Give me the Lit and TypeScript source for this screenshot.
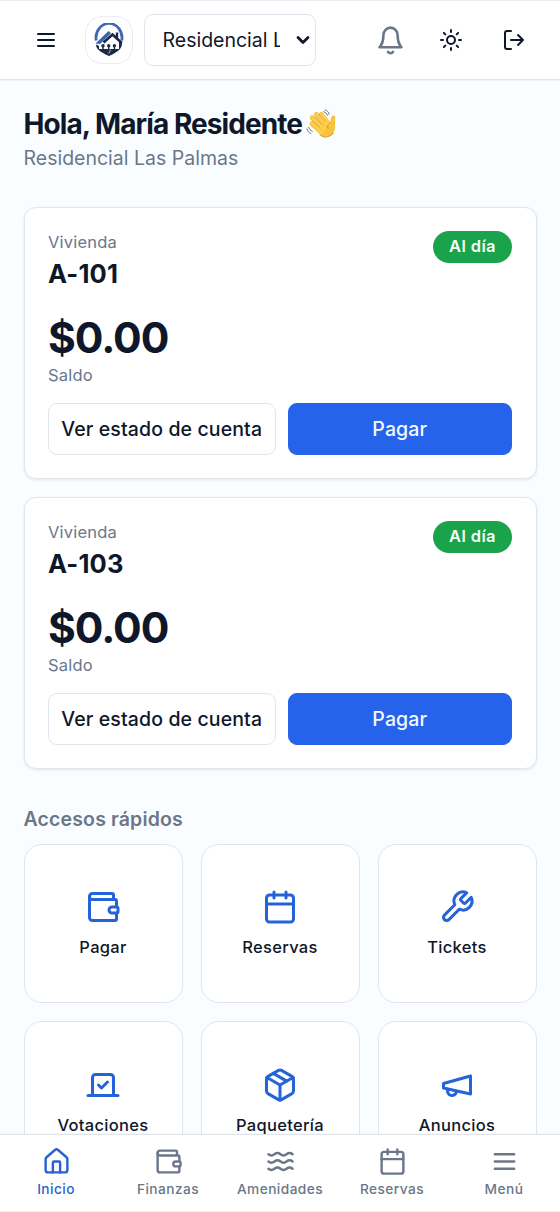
import { LitElement, html, css, svg } from "lit";
import { customElement, property } from "lit/decorators.js";

const ICONS: Record<string, any> = {
  menu: svg`<path d="M4 6h16M4 12h16M4 18h16"/>`,
  bell: svg`<path d="M6.500 8a5.500 6 0 0 1 11 0c0 6.500 3 9.200 3 9.200h-17s3-2.700 3-9.200"/><path d="M10.100 20.800a2.100 1.800 0 0 0 3.800 0"/>`,
  sun: svg`<circle cx="12" cy="12" r="4"/><path d="M12 2v2M12 20v2M4.93 4.93l1.41 1.41M17.66 17.66l1.41 1.41M2 12h2M20 12h2M6.34 17.66l-1.41 1.41M19.07 4.93l-1.41 1.41"/>`,
  logout: svg`<path d="M9 21H5a2 2 0 0 1-2-2V5a2 2 0 0 1 2-2h4"/><path d="m16 17 5-5-5-5M21 12H9"/>`,
  wallet: svg`<path d="M19 7V4a1 1 0 0 0-1-1H5a2 2 0 0 0 0 4h15a1 1 0 0 1 1 1v4h-3a2 2 0 0 0 0 4h3a1 1 0 0 0 1-1v-2a1 1 0 0 0-1-1"/><path d="M3 5v14a2 2 0 0 0 2 2h15a1 1 0 0 0 1-1v-4"/>`,
  calendar: svg`<path d="M8 2v4M16 2v4M3 10h18"/><rect width="18" height="18" x="3" y="4" rx="2"/>`,
  wrench: svg`<path d="M14.7 6.3a1 1 0 0 0 0 1.4l1.6 1.6a1 1 0 0 0 1.4 0l3.77-3.77a6 6 0 0 1-7.94 7.94l-6.91 6.91a2.12 2.12 0 0 1-3-3l6.91-6.91a6 6 0 0 1 7.94-7.94l-3.76 3.76z"/>`,
  vote: svg`<path d="m9 12 2 2 4-4"/><path d="M5 7c0-1.1.9-2 2-2h10a2 2 0 0 1 2 2v12H5V7Z"/><path d="M22 19H2"/>`,
  box: svg`<path d="M11 21.73a2 2 0 0 0 2 0l7-4A2 2 0 0 0 21 16V8a2 2 0 0 0-1-1.73l-7-4a2 2 0 0 0-2 0l-7 4A2 2 0 0 0 3 8v8a2 2 0 0 0 1 1.73z"/><path d="M12 22V12"/><path d="M3.29 7 12 12l8.71-5"/><path d="m7.5 4.27 9 5.15"/>`,
  megaphone: svg`<path d="m3 11 18-5v12L3 14v-3z"/><path d="M11.6 16.8a3 3 0 1 1-5.8-1.6"/>`,
  home: svg`<path d="M15 21v-8a1 1 0 0 0-1-1h-4a1 1 0 0 0-1 1v8"/><path d="M3 10a2 2 0 0 1 .709-1.528l7-5.999a2 2 0 0 1 2.582 0l7 5.999A2 2 0 0 1 21 10v9a2 2 0 0 1-2 2H5a2 2 0 0 1-2-2z"/>`,
  waves: svg`<path d="M2 6c.6.5 1.2 1 2.5 1C7 7 7 5 9.5 5c2.6 0 2.4 2 5 2 2.5 0 2.5-2 5-2 1.3 0 1.9.5 2.5 1"/><path d="M2 12c.6.5 1.2 1 2.5 1 2.5 0 2.5-2 5-2 2.6 0 2.4 2 5 2 2.5 0 2.5-2 5-2 1.3 0 1.9.5 2.5 1"/><path d="M2 18c.6.5 1.2 1 2.5 1 2.5 0 2.5-2 5-2 2.6 0 2.4 2 5 2 2.5 0 2.5-2 5-2 1.3 0 1.9.5 2.5 1"/>`,
};

@customElement("ui-icon")
class UiIcon extends LitElement {
  @property() name = "";
  static styles = css`
    :host { display: block; width: 24px; height: 24px; }
    .glyph { display: block; width: 100%; height: 100%; overflow: visible; }
  `;
  render() {
    return html`<svg class="glyph" viewBox="0 0 24 24" fill="none" stroke="currentColor" stroke-width="2" stroke-linecap="round" stroke-linejoin="round">${ICONS[this.name]}</svg>`;
  }
}

@customElement("unit-card")
class UnitCard extends LitElement {
  @property() unit = "";
  static styles = css`
    :host { display: block; box-sizing: border-box; height: 272px; padding: 23px 23.5px; background: #fff; border: 1px solid #e1e6ee; border-radius: 12px; box-shadow: 0 1px 3px rgba(15, 23, 42, 0.1); color: #0f172a; }
    .top { display: flex; justify-content: space-between; align-items: flex-start; }
    .muted { font-size: 16.5px; line-height: 23px; color: #6b7789; letter-spacing: 0.2px; }
    .name { font-size: 25.5px; line-height: 39px; font-weight: 650; letter-spacing: 0.15px; }
    .badge { box-sizing: border-box; height: 32px; width: 79px; border-radius: 16px; background: #1aa34a; color: #f5fff8; font-size: 16.5px; line-height: 31px; font-weight: 600; text-align: center; letter-spacing: 0.4px; }
    .amount { margin-top: 22px; font-size: 42.5px; line-height: 46px; font-weight: 700; letter-spacing: -1.05px; }
    .balance { margin-top: 2.5px; }
    .actions { display: grid; grid-template-columns: 227.5px 1fr; gap: 12px; margin-top: 16.5px; }
    .btn { box-sizing: border-box; height: 52px; border-radius: 9px; border: 1px solid #e1e6ee; background: #fff; color: #0f172a; font: 500 19.5px/50px Inter, sans-serif; letter-spacing: 0.12px; padding: 0; text-align: center; white-space: nowrap; }
    .primary { background: #2563eb; border-color: #2563eb; color: #f4f8ff; }
  `;
  render() {
    return html`
      <div class="top">
        <div>
          <div class="muted">Vivienda</div>
          <div class="name">${this.unit}</div>
        </div>
        <span class="badge">Al día</span>
      </div>
      <div class="amount">$0.00</div>
      <div class="muted balance">Saldo</div>
      <div class="actions">
        <button class="btn">Ver estado de cuenta</button>
        <button class="btn primary">Pagar</button>
      </div>`;
  }
}

@customElement("app-root")
class AppRoot extends LitElement {
  static styles = css`
    :host { display: flex; flex-direction: column; box-sizing: border-box; height: 1212px; overflow: hidden; background: #f9fdff; color: #0f172a; font-family: Inter, "Liberation Sans", sans-serif; }
    .header { flex: none; box-sizing: border-box; height: 80px; display: flex; align-items: center; padding: 0 34px; background: #fff; border-top: 1px solid #ececef; border-bottom: 1px solid #dfe3e8; box-shadow: 0 1px 1px rgba(15, 23, 42, 0.04); }
    .logo { box-sizing: border-box; width: 48px; height: 48px; margin-left: 27px; border: 1px solid #ebedf2; border-radius: 17px; display: flex; align-items: center; justify-content: center; }
    .mark { width: 32px; height: 34px; }
    .select { box-sizing: border-box; width: 172px; height: 52px; margin-left: 11px; padding: 0 4px 0 17.5px; border: 1px solid #dfe5ee; border-radius: 9px; display: flex; align-items: center; justify-content: space-between; }
    .value { width: 117px; overflow: hidden; white-space: nowrap; font-size: 19.5px; line-height: 30px; }
    .chevron { width: 16px; height: 12px; }
    .tools { margin-left: auto; display: flex; align-items: center; }
    .bell { width: 31px; height: 31px; color: #6b7789; }
    .sun { margin-left: 33px; }
    .exit { margin-left: 39px; }
    .body { flex: 1; min-height: 0; overflow: hidden; padding: 0 23.5px; }
    .title { display: flex; align-items: center; gap: 4px; margin: 25px 0 0; font-size: 28px; line-height: 38px; font-weight: 700; letter-spacing: -0.92px; white-space: nowrap; }
    .wave { width: 31px; height: 31px; }
    .sub { margin: 0; font-size: 19.5px; line-height: 31px; color: #6b7789; }
    .units { display: grid; gap: 18px; margin-top: 33px; }
    .section { margin: 35px 0 0; font-size: 19.5px; line-height: 30px; font-weight: 600; color: #6b7789; letter-spacing: 0.15px; }
    .tiles { display: grid; grid-template-columns: repeat(3, 1fr); gap: 18px; margin-top: 10px; }
    .tile { box-sizing: border-box; height: 159px; display: flex; flex-direction: column; align-items: center; justify-content: center; gap: 10px; background: #fff; border: 1px solid #e1e5ea; border-radius: 18px; font-size: 16.5px; line-height: 24px; font-weight: 500; letter-spacing: 0.3px; }
    .tile:nth-child(n + 4) { padding-top: 2px; }
    .tile ui-icon { width: 36px; height: 36px; color: #2563d9; }
    .nav { flex: none; box-sizing: border-box; height: 78px; display: grid; grid-template-columns: repeat(5, 1fr); background: #fff; border-top: 1px solid #dfe4ea; border-bottom: 1px solid #ececef; box-shadow: 0 -1px 1px rgba(15, 23, 42, 0.03); }
    .tab { display: flex; flex-direction: column; align-items: center; padding-top: 12px; gap: 3px; color: #6b7789; font-size: 13.7px; line-height: 21px; font-weight: 500; letter-spacing: 0.45px; }
    .tab ui-icon { width: 29px; height: 29px; }
    .active { color: #2a62cf; }
  `;

  render() {
    const tiles = [
      ["wallet", "Pagar"], ["calendar", "Reservas"], ["wrench", "Tickets"],
      ["vote", "Votaciones"], ["box", "Paquetería"], ["megaphone", "Anuncios"],
    ];
    const tabs = [
      ["home", "Inicio"], ["wallet", "Finanzas"], ["waves", "Amenidades"],
      ["calendar", "Reservas"], ["menu", "Menú"],
    ];
    return html`
      <header class="header">
        <ui-icon name="menu"></ui-icon>
        <div class="logo">
          <svg class="mark" viewBox="0 0 32 34" fill="none">
            <path d="M3.200 17.500a13 14.500 0 1 1 25.600 0" stroke="#4267b4" stroke-width="2.800"/>
            <path d="M2.500 20.500 15.500 8l2.500 2.300L7 21z" fill="#3c64ad"/>
            <path d="M10.500 19.500 19.500 11.500l9.300 8.500" stroke="#1c2947" stroke-width="2.600"/>
            <path d="M22.800 9.500h2.400v7l-2.400-2z" fill="#1c2947"/>
            <path d="M3 21.500c0 4 3 7 13 11.500 10-4.500 13-7.500 13-13l-3-2v8H6v-3z" fill="#1c2947"/>
            <path d="M10 22v4.500M15.700 22v4.500M21.400 22v4.500" stroke="#1c2947" stroke-width="1.400"/>
            <circle cx="10" cy="22.800" r="1.700" fill="#1c2947"/><circle cx="15.700" cy="22.800" r="1.700" fill="#1c2947"/><circle cx="21.400" cy="22.800" r="1.700" fill="#1c2947"/>
            <path d="M17 26.500c1.500 1.200-1.500 2-1 4" stroke="#c3cddd" stroke-width="1"/>
          </svg>
        </div>
        <div class="select">
          <span class="value">Residencial Las Palmas</span>
          <svg class="chevron" viewBox="0 0 16 12" fill="none" stroke="#0f172a" stroke-width="2.8" stroke-linecap="round" stroke-linejoin="round"><path d="m3 3.500 5 5 5-5"/></svg>
        </div>
        <div class="tools">
          <ui-icon class="bell" name="bell"></ui-icon>
          <ui-icon class="sun" name="sun"></ui-icon>
          <ui-icon class="exit" name="logout"></ui-icon>
        </div>
      </header>
      <main class="body">
        <h1 class="title"><span>Hola, María Residente</span>
          <svg class="wave" viewBox="0 0 32 32" fill="none" stroke-linecap="round" stroke-linejoin="round" role="img">
            <path d="M6 15 17 25M6.200 9 19 21M10.500 5.500 21 17M15.800 5.500 23 15" stroke="#dc9d28" stroke-width="4.600"/>
            <path d="M6 15.500 13 24.500c3 4.500 8 5.500 12 3 4-2.500 5.300-6 5-11 0-3 .3-5.500 .2-8-.2-2.500-3.600-2.500-4.100 0l-1.100 5L17 8z" fill="#f9c33f"/>
            <path d="M5.800 14.700 16 24M6 8.700 19 20.500M10.300 5.200 21 16M15.700 5 24 15.500" stroke="#ffcd4c" stroke-width="3.700"/>
            <path d="M7.800 13.300 14 19M8.500 8.300 17 16.500M13.300 5.500 20 13" stroke="#e3a42f" stroke-width=".9"/>
            <path d="M25.200 14c-2.500 1-3.500 3.500-2.500 6" stroke="#dc9927" stroke-width="1"/>
            <path d="M14.500 26.500c4 4 10 3 13.500-1.500" stroke="#e4a12c" stroke-width="1.200"/>
            <path d="M19.800 1c2.300.6 3.600 2.200 4.100 4.500M18.300 2.800c2 .6 3.200 1.800 3.800 3.700M1 20.500c.5 2.300 1.800 4 4 4.800M2.800 19c.6 1.900 1.700 3.200 3.700 4" stroke="#6f7277" stroke-width="1"/>
          </svg>
        </h1>
        <p class="sub">Residencial Las Palmas</p>
        <div class="units">
          <unit-card unit="A-101"></unit-card>
          <unit-card unit="A-103"></unit-card>
        </div>
        <h2 class="section">Accesos rápidos</h2>
        <div class="tiles">
          ${tiles.map(([icon, label]) => html`<div class="tile"><ui-icon name=${icon}></ui-icon><span>${label}</span></div>`)}
        </div>
      </main>
      <nav class="nav">
        ${tabs.map(([icon, label], i) => html`<div class="tab ${i === 0 ? "active" : ""}"><ui-icon name=${icon}></ui-icon><span>${label}</span></div>`)}
      </nav>`;
  }
}
